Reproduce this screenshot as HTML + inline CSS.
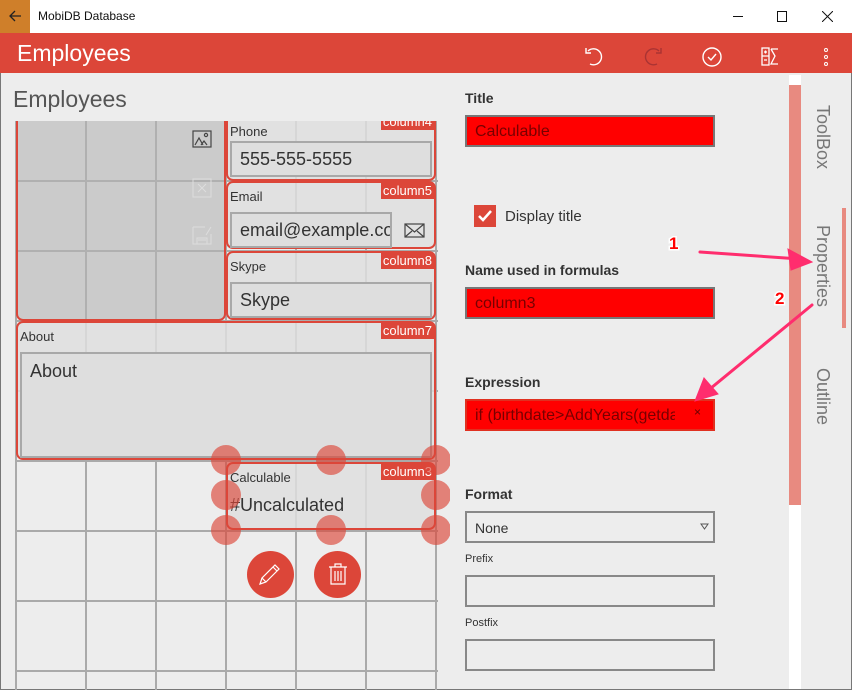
<!DOCTYPE html>
<html><head><meta charset="utf-8"><style>
*{box-sizing:border-box;margin:0;padding:0}
body{width:852px;height:690px;overflow:hidden;background:#ededed;font-family:"Liberation Sans",sans-serif;position:relative;color:#333}
.abs{position:absolute}
.tb{left:0;top:0;width:852px;height:33px;background:#fff}
.hd{left:0;top:33px;width:852px;height:40px;background:#dc4639}
.grid{left:0;top:121px;width:450px;height:569px;overflow:hidden}
.vl{position:absolute;top:0;width:2px;height:600px;background:#aaa}
.hl{position:absolute;left:16px;width:422px;height:2px;background:#aaa}
.fld{position:absolute;border:2px solid #dc4639;border-radius:7px;background:rgba(222,222,222,.85)}
.lbl{position:absolute;left:2px;font-size:13px;color:#333}
.tag{position:absolute;right:0;top:0;background:#dc4639;color:#fff;font-size:13px;padding:0 2px;line-height:16px}
.inp{position:absolute;border:2px solid #a8a8a8;background:#dedede;font-size:18px;color:#333;padding-left:8px}
.h{position:absolute;width:30px;height:30px;border-radius:50%;background:rgba(220,70,57,.65)}
.pl{position:absolute;left:465px;font-size:14px;font-weight:bold;color:#333}
.pi{position:absolute;left:465px;width:250px;height:32px;border:2px solid #777}
.red{background:#f00;color:#700;font-size:16px;padding:6px 8px}
.tab{position:absolute;writing-mode:vertical-rl;font-size:18px;color:#777;left:812px}
</style></head><body>
<div class="abs tb">
 <div class="abs" style="left:0;top:0;width:30px;height:33px;background:#cf7f2a"></div>
 <svg class="abs" style="left:8px;top:9px" width="14" height="14"><path d="M13 7H2M7 2L2 7l5 5" stroke="#222" fill="none" stroke-width="1.3"/></svg>
 <div class="abs" style="left:38px;top:9px;font-size:12px;color:#111">MobiDB Database</div>
 <div class="abs" style="left:733px;top:16px;width:10px;height:1px;background:#111"></div>
 <div class="abs" style="left:777px;top:11px;width:10px;height:11px;border:1px solid #111"></div>
 <svg class="abs" style="left:822px;top:11px" width="11" height="11"><path d="M0 0L11 11M11 0L0 11" stroke="#111"/></svg>
</div>
<div class="abs" style="left:0;top:33px;width:1px;height:657px;background:#777"></div>
<div class="abs" style="left:851px;top:33px;width:1px;height:657px;background:#777"></div>
<div class="abs" style="left:0;top:689px;width:852px;height:1px;background:#777"></div>
<div class="abs hd">
 <div class="abs" style="left:17px;top:7px;font-size:23px;color:#fff">Employees</div>
 <svg class="abs" style="left:582px;top:12px" width="24" height="24" fill="none" stroke="#fff" stroke-width="1.4"><path d="M6 6a8 8 0 1 1 2 13"/><path d="M4 3v5h5"/></svg>
 <svg class="abs" style="left:641px;top:12px" width="24" height="24" fill="none" stroke="#a33" stroke-width="1.4"><path d="M18 6a8 8 0 1 0-2 13"/><path d="M20 3v5h-5"/></svg>
 <svg class="abs" style="left:700px;top:12px" width="24" height="24" fill="none" stroke="#fff" stroke-width="1.4"><circle cx="12" cy="12" r="9"/><path d="M8 12l3 3 5-6"/></svg>
 <svg class="abs" style="left:760px;top:13px" width="24" height="22" fill="none" stroke="#fff" stroke-width="1.3"><rect x="2" y="2" width="7" height="17"/><path d="M2 10h7M4 6h3M5.5 4.5v3M4 14h3M11 3h7M11 3l4 7-4 8h7"/></svg>
 <svg class="abs" style="left:822px;top:14px" width="8" height="20" fill="none" stroke="#fff"><circle cx="4" cy="3" r="1.5"/><circle cx="4" cy="10" r="1.5"/><circle cx="4" cy="17" r="1.5"/></svg>
</div>
<div class="abs" style="left:13px;top:86px;font-size:23px;color:#555">Employees</div>
<div class="abs grid">
 <div class="vl" style="left:15px"></div><div class="vl" style="left:85px"></div><div class="vl" style="left:155px"></div><div class="vl" style="left:225px"></div><div class="vl" style="left:295px"></div><div class="vl" style="left:365px"></div><div class="vl" style="left:435px"></div>
 <div class="hl" style="top:59px"></div><div class="hl" style="top:129px"></div><div class="hl" style="top:199px"></div><div class="hl" style="top:269px"></div><div class="hl" style="top:339px"></div><div class="hl" style="top:409px"></div><div class="hl" style="top:479px"></div><div class="hl" style="top:549px"></div>
 <div class="fld" style="left:16px;top:-20px;width:210px;height:220px;background:rgba(180,180,180,.6)"></div>
 <svg class="abs" style="left:192px;top:9px" width="20" height="20" fill="none" stroke="#444" stroke-width="1.2"><rect x="1" y="1" width="18" height="16"/><path d="M3 15l4-7 4 7M9 15l3-4 3 4"/><circle cx="14" cy="5" r="1.6"/></svg>
 <svg class="abs" style="left:192px;top:57px" width="20" height="20" fill="none" stroke="#ddd" stroke-width="1"><rect x="1" y="1" width="18" height="18"/><path d="M6 6l8 8M14 6l-8 8"/></svg>
 <svg class="abs" style="left:192px;top:104px" width="20" height="20" fill="none" stroke="#ddd" stroke-width="1"><path d="M1 2h12M1 2v17h18V9M5 19v-6h10v6M6 15h8M14 10l5-8"/></svg>
 <div class="fld" style="left:226px;top:-11px;width:210px;height:71px"><div class="lbl" style="top:12px">Phone</div><div class="tag" style="top:2px">column4</div><div class="inp" style="left:2px;top:29px;width:202px;height:36px;line-height:32px">555-555-5555</div></div>
 <div class="fld" style="left:226px;top:60px;width:210px;height:68px"><div class="lbl" style="top:6px">Email</div><div class="tag">column5</div><div class="inp" style="left:2px;top:29px;width:162px;height:36px;line-height:32px;overflow:hidden;white-space:nowrap">email@example.com</div>
 <svg class="abs" style="left:176px;top:39px" width="22" height="18" fill="none" stroke="#444" stroke-width="1.2"><rect x="1" y="2" width="19" height="13"/><path d="M1 2l9.5 8L20 2M1 15l7-6M20 15l-7-6"/></svg></div>
 <div class="fld" style="left:226px;top:130px;width:210px;height:69px"><div class="lbl" style="top:6px">Skype</div><div class="tag">column8</div><div class="inp" style="left:2px;top:29px;width:202px;height:36px;line-height:32px">Skype</div></div>
 <div class="fld" style="left:16px;top:200px;width:420px;height:139px"><div class="lbl" style="top:6px">About</div><div class="tag">column7</div><div class="inp" style="left:2px;top:29px;width:412px;height:106px;padding-top:7px">About</div></div>
 <div class="fld" style="left:226px;top:341px;width:210px;height:68px"><div class="lbl" style="top:6px">Calculable</div><div class="tag">column3</div><div style="position:absolute;left:2px;top:31px;font-size:18px">#Uncalculated</div></div>
 <div class="h" style="left:211px;top:324px"></div><div class="h" style="left:316px;top:324px"></div><div class="h" style="left:421px;top:324px"></div>
 <div class="h" style="left:211px;top:359px"></div><div class="h" style="left:421px;top:359px"></div>
 <div class="h" style="left:211px;top:394px"></div><div class="h" style="left:316px;top:394px"></div><div class="h" style="left:421px;top:394px"></div>
 <div class="abs" style="left:247px;top:430px;width:47px;height:47px;border-radius:50%;background:#dc4639"></div>
 <svg class="abs" style="left:258px;top:441px" width="24" height="24" fill="none" stroke="#fff" stroke-width="1.2"><path d="M2 22l2-6L17 3l4 4L8 20zM4 16l4 4M15 5l4 4"/></svg>
 <div class="abs" style="left:314px;top:430px;width:47px;height:47px;border-radius:50%;background:#dc4639"></div>
 <svg class="abs" style="left:326px;top:441px" width="24" height="24" fill="none" stroke="#fff" stroke-width="1.2"><path d="M3 5h18M9 5V2h6v3M5 5v17h14V5M9 9v10M12 9v10M15 9v10"/></svg>
</div>
<div class="pl" style="top:90px">Title</div>
<div class="pi red" style="top:115px">Calculable</div>
<div class="abs" style="left:474px;top:205px;width:22px;height:22px;background:#dc4639"></div>
<svg class="abs" style="left:476px;top:207px" width="18" height="18" fill="none" stroke="#fff" stroke-width="2.5"><path d="M3 9l4 4 8-9"/></svg>
<div class="abs" style="left:505px;top:208px;font-size:15px;color:#333">Display title</div>
<div class="pl" style="top:262px">Name used in formulas</div>
<div class="pi red" style="top:287px">column3</div>
<div class="pl" style="top:374px">Expression</div>
<div class="pi red" style="top:399px;border-color:#e03020"><div style="width:200px;overflow:hidden;white-space:nowrap">if (birthdate&gt;AddYears(getdate</div></div>
<div class="abs" style="left:694px;top:405px;font-size:12px;color:#600">×</div>
<div class="pl" style="top:486px">Format</div>
<div class="pi" style="top:511px;border-color:#888;font-size:14px;padding:7px 8px">None</div>
<svg class="abs" style="left:700px;top:523px" width="9" height="7" fill="none" stroke="#555"><path d="M1 1h7L4.5 6z"/></svg>
<div class="abs" style="left:465px;top:553px;font-size:11px">Prefix</div>
<div class="pi" style="top:575px;border-color:#888"></div>
<div class="abs" style="left:465px;top:617px;font-size:11px">Postfix</div>
<div class="pi" style="top:639px;border-color:#888"></div>
<div class="abs" style="left:789px;top:75px;width:12px;height:614px;background:#fff"></div>
<div class="abs" style="left:789px;top:85px;width:12px;height:420px;background:#e88a80"></div>
<div class="tab" style="top:105px">ToolBox</div>
<div class="tab" style="top:225px">Properties</div>
<div class="tab" style="top:368px">Outline</div>
<div class="abs" style="left:842px;top:208px;width:4px;height:120px;background:#e88a80"></div>
<svg class="abs" style="left:0;top:0" width="852" height="690"><g fill="#ff2d6e" stroke="#ff2d6e" stroke-linecap="round">
<path d="M700 252L800 259" stroke-width="3"/><path d="M812 262L788 249L791 270z"/>
<path d="M812 305L705 393" stroke-width="3"/><path d="M695 401L704 378L718 394z"/></g>
<g font-family="Liberation Sans" font-weight="bold" font-size="17" fill="#f00" stroke="#fff" stroke-width="3" paint-order="stroke"><text x="669" y="249">1</text><text x="775" y="304">2</text></g></svg>
</body></html>
